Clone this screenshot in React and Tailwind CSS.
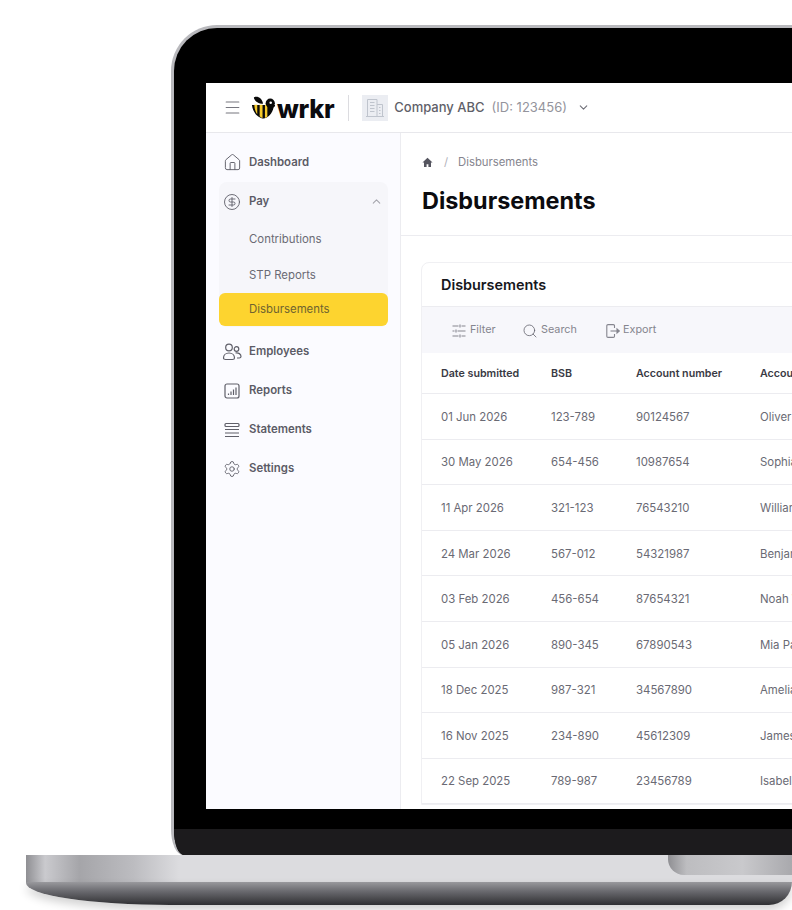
import React from 'react'
import { ChevronDown, ChevronUp, CircleDollarSign, House, Menu, Search, Settings } from 'lucide-react'

const rows = [
    ['01 Jun 2026', '123-789', '90124567', 'Oliver Smith'],
    ['30 May 2026', '654-456', '10987654', 'Sophia Brown'],
    ['11 Apr 2026', '321-123', '76543210', 'William Clark'],
    ['24 Mar 2026', '567-012', '54321987', 'Benjamin Lee'],
    ['03 Feb 2026', '456-654', '87654321', 'Noah Wilson'],
    ['05 Jan 2026', '890-345', '67890543', 'Mia Parker'],
    ['18 Dec 2025', '987-321', '34567890', 'Amelia Scott'],
    ['16 Nov 2025', '234-890', '45612309', 'James Hall'],
    ['22 Sep 2025', '789-987', '23456789', 'Isabella King'],
]

const UsersIcon = () => (
    <svg width="20" height="20" viewBox="0 0 20 20" fill="none" stroke="currentColor" strokeWidth="1.2">
        <circle cx="7" cy="5.5" r="3.3" />
        <path d="M1.5 16c0-3 2.400-5 5.500-5s5.500 2 5.500 5c0 1-1 1.500-2 1.500H3.500c-1 0-2-.5-2-1.500z" />
        <circle cx="14.500" cy="7" r="2.300" />
        <path d="M13.500 11c3-.5 5.500 1 5.500 3.500 0 1-.8 1.500-1.800 1.500H15" />
    </svg>
)

const ReportsIcon = () => (
    <svg width="20" height="20" viewBox="0 0 20 20" fill="none" stroke="currentColor" strokeWidth="1.2">
        <rect x="3" y="3" width="14" height="14" rx="2" />
        <path d="M6.500 14v-1.500M9 14v-3.500M11.500 14V8.500M14 14V6.500" />
    </svg>
)

const StatementsIcon = () => (
    <svg width="20" height="20" viewBox="0 0 20 20" fill="none" stroke="currentColor" strokeWidth="1.200">
        <rect x="3" y="3.500" width="14" height="3" rx="1" />
        <path d="M3 9.500h14M3 13h14M3 16.500h14" />
    </svg>
)

const FilterIcon = () => (
    <svg width="16" height="16" viewBox="0 0 16 16" fill="none" stroke="currentColor" strokeWidth="1.1">
        <path d="M1.500 3h6M10.500 3h4M1.500 8h2M6.500 8h8M1.500 13h6M10.500 13h4" />
        <path d="M9 1.500v3M5 6.500v3M9 11.500v3" />
    </svg>
)

const ExportIcon = () => (
    <svg width="16" height="16" viewBox="0 0 16 16" fill="none" stroke="currentColor" strokeWidth="1.1">
        <path d="M9.500 5V2.800c0-.7-.5-1.200-1.200-1.200H3c-.7 0-1.200.5-1.200 1.200v10.400c0 .7.5 1.200 1.200 1.200h5.300c.7 0 1.200-.5 1.200-1.200V11" />
        <path d="M5.500 8h8" />
        <path d="M12 6l2.300 2-2.300 2z" fill="currentColor" />
    </svg>
)

const BeeLogo = () => (
    <svg width="25" height="24" viewBox="0 0 26 24">
        <path d="M3 .8C7 -0.800 11.500 1.500 12.500 7.500 8 7.500 3.500 5 3 .8z" fill="#0a0a0a" />
        <path d="M1 9h24c0 1-.5 2-1.500 2.500C22 18 18 22 13.500 23 7 22.500 1.500 16 1 9z" fill="#0a0a0a" />
        <path d="M3.500 8.500h3v10c-1.800-2.500-3-6-3-10zM9 8.500h3v14c-1-.3-2-1-3-2zM14.500 8.500h2.500v12.500l-2.500 1.500z" fill="#f5c92a" />
        <circle cx="20" cy="7" r="4.800" fill="#0a0a0a" />
        <circle cx="20.500" cy="6.500" r="1.300" fill="#ffffff" />
    </svg>
)

const BuildingIcon = () => (
    <svg width="20" height="20" viewBox="0 0 20 20" fill="none" stroke="#bfc4cd" strokeWidth="1">
        <path d="M2.500 18.500V1.500h9.500v17M12 6.500h5.500v12M1 18.500h18" />
        <path d="M5 4.500h4.500M5 7.500h4.500M5 10.500h4.500M5 13.500h4.500M14 9.500h1.500M14 12.500h1.500M14 15.500h1.500" />
    </svg>
)

const NavItem = ({ icon, label }) => (
    <div className="flex items-center gap-[7px] pl-[3px] h-[39px] text-[11.4px] font-semibold text-[#5b5b66]">
        <span className="w-[20px] flex justify-center text-[#5f5f69]">{icon}</span>
        <span>{label}</span>
    </div>
)

const Sidebar = () => (
    <aside className="w-[195px] shrink-0 bg-[#fbfbff] border-r border-[#ececf0] pl-[13px] pr-[12px] pt-[10px]">
        <NavItem icon={<House size={19} strokeWidth={1.2} />} label="Dashboard" />
        <div className="bg-[#f6f6fa] rounded-lg pb-[1px]">
            <div className="flex items-center justify-between pr-[5px] mb-[1px]">
                <NavItem icon={<CircleDollarSign size={18} strokeWidth={1.2} />} label="Pay" />
                <ChevronUp size={13} className="text-[#a5a5ad]" />
            </div>
            <div className="h-[36px] flex items-center pl-[30px] text-[11.4px] text-[#6a6a74]">Contributions</div>
            <div className="h-[36px] flex items-center pl-[30px] text-[11.4px] text-[#6a6a74]">STP Reports</div>
            <div className="h-[33px] -mt-[1px] pt-[1px] flex items-center pl-[30px] text-[11.4px] text-[#6f6330] bg-[#fdd42f] rounded-md">Disbursements</div>
        </div>
        <div className="pt-[5px]">
            <NavItem icon={<UsersIcon />} label="Employees" />
            <NavItem icon={<ReportsIcon />} label="Reports" />
            <NavItem icon={<StatementsIcon />} label="Statements" />
            <NavItem icon={<Settings size={18} strokeWidth={1.2} />} label="Settings" />
        </div>
    </aside>
)

const Table = () => (
    <div className="w-[600px] border border-[#f0f0f3] rounded-t-lg">
        <div className="h-[44px] flex items-center pl-[19px] text-[14.4px] font-semibold text-[#17171c] border-b border-[#ececf0]">Disbursements</div>
        <div className="h-[46px] pt-[1px] bg-[#f7f7fb] flex items-center pl-[29px] text-[10.800px] text-[#85858e]">
            <span className="flex items-center gap-[3px] w-[71px]"><FilterIcon /> Filter</span>
            <span className="flex items-center gap-[3px] w-[83px]"><Search size={16} strokeWidth={1.2} className="text-[#62626c]" /> Search</span>
            <span className="flex items-center gap-[2px]"><ExportIcon /> Export</span>
        </div>
        <div className="h-[41px] pt-[2px] grid grid-cols-[110px_85px_124px_1fr] items-center pl-[19px] text-[10.700px] font-semibold text-[#3a3a44] border-b border-[#ececf0]">
            <span>Date submitted</span>
            <span>BSB</span>
            <span>Account number</span>
            <span className="whitespace-nowrap">Account name</span>
        </div>
        {rows.map(row => (
            <div key={row[0]} className="h-[45.6px] pt-[2px] grid grid-cols-[110px_85px_124px_1fr] items-center pl-[19px] text-[11.4px] text-[#6a6a74] border-b border-[#ececf0]">
                {row.map(cell => <span key={cell} className="whitespace-nowrap">{cell}</span>)}
            </div>
        ))}
    </div>
)

const Screen = () => (
    <div className="w-[586px] h-[726px] bg-white overflow-hidden flex flex-col" style={{ fontFamily: 'Inter, sans-serif' }}>
        <header className="h-[50px] shrink-0 border-b border-[#e8e8ec] flex items-center pl-[17px]">
            <Menu size={19} strokeWidth={1.4} className="text-[#77777f]" />
            <div className="flex items-center ml-[9px] h-[30px]">
                <BeeLogo />
                <span className="text-[25.3px] leading-none font-extrabold text-[#0b0b0f] ml-[1px] mt-[3px] tracking-[-0.3px]">wrkr</span>
            </div>
            <div className="w-px h-[26px] bg-[#dcdce0] ml-[14px]" />
            <div className="w-[26px] h-[26px] ml-[13px] bg-[#ebedf2] flex items-center justify-center"><BuildingIcon /></div>
            <span className="ml-[6px] text-[13px] font-medium text-[#5f5f69]">Company ABC</span>
            <span className="ml-[7px] text-[13px] text-[#94949c]">(ID: 123456)</span>
            <ChevronDown size={13} className="ml-[10px] text-[#6f6f78]" />
        </header>
        <div className="flex flex-1 min-h-0">
            <Sidebar />
            <main className="flex-1 min-w-0 overflow-hidden">
                <div className="h-[103px] border-b border-[#ececf0] pl-[21px] pt-[21px]">
                    <div className="flex items-center text-[11.3px] text-[#85858e]">
                        <svg width="11" height="11" viewBox="0 0 12 12" fill="#55555f"><path d="M6 .8L.5 6h1.700v5h2.800V7.800h2V11h2.800V6h1.700z" /></svg>
                        <span className="ml-[11px] text-[#b0b0b8]">/</span>
                        <span className="ml-[10px]">Disbursements</span>
                    </div>
                    <h1 className="mt-[15px] text-[23.4px] leading-[30px] font-bold text-[#0b0b0f]">Disbursements</h1>
                </div>
                <div className="pl-[20px] pt-[26px]">
                    <Table />
                </div>
            </main>
        </div>
    </div>
)

export default function App() {
    return (
        <div className="relative w-[792px] h-[910px] bg-white overflow-hidden">
            <div className="pt-[25px] pl-[171px]">
                <div className="w-[700px] h-[830px] bg-[#b9b9bd] rounded-tl-[46px] rounded-bl-[12px_26px] pl-[3px] pt-[3px]">
                    <div className="h-full bg-black rounded-tl-[43px] rounded-bl-[10px_25px] overflow-hidden flex flex-col">
                        <div className="pl-[32px] pt-[55px] flex-1">
                            <Screen />
                        </div>
                        <div className="h-[26px] bg-[#1c1b1d]" />
                    </div>
                </div>
            </div>
            <div className="ml-[26px] h-[27px] bg-[linear-gradient(90deg,#8f8f93_0%,#cacace_2.5%,#a5a5a9_7%,#bcbcc0_14%,#dcdcdf_20%,#dcdcdf_100%)]" />
            <div className="ml-[26px] h-[23px] rounded-bl-[150px_23px] rounded-br-[24px] bg-[linear-gradient(180deg,#99999d_0%,#6a6a6f_40%,#2f2f32_100%)] shadow-[0_5px_10px_rgba(0,0,0,0.18)]" />
            {/* notch over the base */}
            <div className="absolute left-[668px] top-[855px] w-[124px] h-[20px] rounded-bl-[16px] bg-[linear-gradient(90deg,#8f8f93,#bdbdc0_15%,#c9c9cc_60%,#a9a9ad)]" />
        </div>
    )
}
